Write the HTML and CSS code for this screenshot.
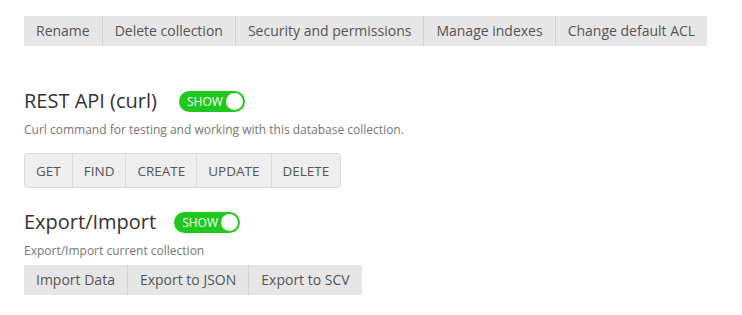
FILE: index.html
```html
<!DOCTYPE html>
<html>
<head>
<meta charset="utf-8">
<link rel="stylesheet" href="styles.css">
</head>
<body>
<div class="page">
  <div class="bar">
    <button class="btn">Rename</button>
    <button class="btn">Delete collection</button>
    <button class="btn">Security and permissions</button>
    <button class="btn">Manage indexes</button>
    <button class="btn">Change default ACL</button>
  </div>

  <div class="section first">
    <div class="head">
      <h2 class="title">REST API (curl)</h2>
      <span class="toggle"><span class="toggle-label">SHOW</span><span class="knob"></span></span>
    </div>
    <p class="desc">Curl command for testing and working with this database collection.</p>
    <div class="group">
      <button class="gbtn">GET</button>
      <button class="gbtn">FIND</button>
      <button class="gbtn">CREATE</button>
      <button class="gbtn">UPDATE</button>
      <button class="gbtn">DELETE</button>
    </div>
  </div>

  <div class="section second">
    <div class="head">
      <h2 class="title">Export/Import</h2>
      <span class="toggle"><span class="toggle-label">SHOW</span><span class="knob"></span></span>
    </div>
    <p class="desc desc2">Export/Import current collection</p>
    <div class="bar bar2">
      <button class="btn">Import Data</button>
      <button class="btn">Export to JSON</button>
      <button class="btn">Export to SCV</button>
    </div>
  </div>
</div>
</body>
</html>
```

FILE: styles.css
```css
* { box-sizing: border-box; }
html, body { margin: 0; padding: 0; background: #fff; }
body { font-family: "Open Sans", "Noto Sans", sans-serif; color: #444; }
.page { padding: 16px 24px; display: flex; flex-direction: column; align-items: flex-start; }

.bar { display: flex; background: #e6e6e6; }
.btn {
  font-family: inherit; font-size: 14px; color: #555;
  background: #e6e6e6; border: 0; border-left: 1px solid #d2d2d2;
  height: 30px; padding: 0 12px; margin: 0; line-height: 30px; cursor: pointer;
}
.btn:first-child { border-left: 0; }

.section { display: flex; flex-direction: column; align-items: flex-start; }
.section.first { margin-top: 43px; }
.section.second { margin-top: 22px; }

.head { display: flex; align-items: center; height: 24px; }
.title { margin: 0; font-size: 20px; font-weight: 400; line-height: 24px; color: #333; }
.first .toggle { margin-left: 22px; }
.second .toggle { margin-left: 18px; }
.toggle {
  display: inline-flex; align-items: center; justify-content: space-between;
  width: 66px; height: 21px; border-radius: 11px; background: #1ec81e;
  padding: 0 2px 0 8px;
}
.toggle-label { color: #fff; font-size: 12px; line-height: 21px; }
.knob { width: 17px; height: 17px; border-radius: 50%; background: #fff; }

.desc { margin: 8px 0 0; font-size: 12px; line-height: 18px; color: #777; }
.desc2 { margin-top: 8px; }

.group { display: flex; margin-top: 14px; border: 1px solid #dcdcdc; border-radius: 3px; background: #eee; overflow: hidden; }
.gbtn {
  font-family: inherit; font-size: 13.5px; color: #555; background: #eee;
  border: 0; border-left: 1px solid #dcdcdc; height: 33px; padding: 0 11px; margin: 0; cursor: pointer;
}
.gbtn:first-child { border-left: 0; }

.bar2 { margin-top: 5px; }
```
